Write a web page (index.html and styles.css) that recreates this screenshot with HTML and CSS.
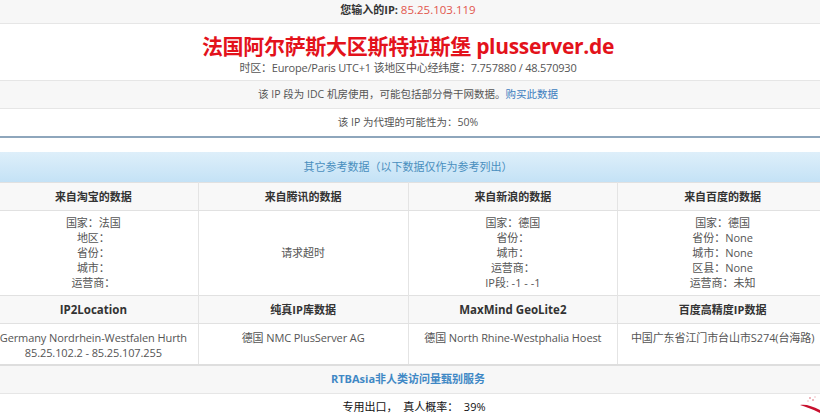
FILE: index.html
```html
<!DOCTYPE html>
<html lang="zh-CN">
<head>
<meta charset="utf-8">
<title>IP 查询</title>
<link rel="stylesheet" href="styles.css">
</head>
<body>
<div class="page">
  <div class="topbar"><b>您输入的IP:</b> <span class="ip">85.25.103.119</span></div>
  <div class="hero">
    <h1 class="title">法国阿尔萨斯大区斯特拉斯堡 plusserver.de</h1>
    <div class="sub">时区：Europe/Paris UTC+1 该地区中心经纬度：7.757880 / 48.570930</div>
  </div>
  <div class="row gray idc">该 IP 段为 IDC 机房使用，可能包括部分骨干网数据。<a class="link" href="#">购买此数据</a></div>
  <div class="row proxy">该 IP 为代理的可能性为：50%</div>
  <div class="band">其它参考数据（以下数据仅作为参考列出）</div>
  <table class="grid">
    <colgroup><col class="c"><col class="c"><col class="c"><col class="c"></colgroup>
    <tr class="th">
      <td>来自淘宝的数据</td><td>来自腾讯的数据</td><td>来自新浪的数据</td><td>来自百度的数据</td>
    </tr>
    <tr class="td1">
      <td>国家：法国<br>地区：<br>省份：<br>城市：<br>运营商：</td>
      <td>请求超时</td>
      <td>国家：德国<br>省份：<br>城市：<br>运营商：<br>IP段: -1 - -1</td>
      <td>国家：德国<br>省份：None<br>城市：None<br>区县：None<br>运营商：未知</td>
    </tr>
    <tr class="th">
      <td class="latin">IP2Location</td><td>纯真IP库数据</td><td class="latin">MaxMind GeoLite2</td><td>百度高精度IP数据</td>
    </tr>
    <tr class="td2">
      <td>Germany Nordrhein-Westfalen Hurth<br>85.25.102.2 - 85.25.107.255</td>
      <td>德国 NMC PlusServer AG</td>
      <td>德国 North Rhine-Westphalia Hoest</td>
      <td>中国广东省江门市台山市S274(台海路)</td>
    </tr>
  </table>
  <div class="row gray rtb">RTBAsia非人类访问量甄别服务</div>
  <div class="row real">专用出口，&nbsp;&nbsp;真人概率：&nbsp;&nbsp;39%</div>
</div>
<svg class="logo" width="24" height="24" viewBox="0 0 24 24">
  <circle cx="14" cy="3" r="1" fill="#e8a0a8"/>
  <circle cx="17" cy="5" r="1" fill="#e8a0a8"/>
  <circle cx="12" cy="6" r="0.8" fill="#f0b8c0"/>
  <circle cx="19" cy="2" r="0.8" fill="#f0b8c0"/>
  <path d="M4 10 C10 9 16 11 24 15 L24 18 C16 14 10 12 4 10 Z" fill="#c8102e"/>
</svg>
</body>
</html>
```
FILE: styles.css
```css
html, body {
  margin: 0;
  padding: 0;
  background: #fff;
  overflow: hidden;
}
body {
  font-family: "Open Sans", "Noto Sans CJK SC", sans-serif;
  font-size: 11px;
  color: #555;
}
.page {
  width: 840px;
  margin-left: -12px;
}
.topbar {
  height: 23px;
  line-height: 20px;
  text-align: center;
  background: #f7f7f7;
  border-bottom: 1px solid #e6e6e6;
  font-size: 11px;
  color: #333;
}
.topbar .ip {
  color: #e2564d;
  font-size: 11.5px;
}
.hero {
  height: 56px;
  text-align: center;
  background: #fff;
}
.title {
  margin: 0;
  padding-top: 9px;
  font-size: 21px;
  line-height: 27px;
  font-weight: bold;
  color: #e3121b;
  letter-spacing: -0.3px;
}
.sub {
  font-size: 11px;
  line-height: 16px;
  color: #555;
  letter-spacing: -0.2px;
}
.row {
  text-align: center;
  line-height: 26px;
  height: 27px;
}
.gray {
  background: #f7f7f7;
  border-top: 1px solid #e6e6e6;
  border-bottom: 1px solid #e6e6e6;
}
.idc {
  font-size: 10.5px;
}
.link {
  color: #3d7ebf;
  text-decoration: none;
}
.proxy {
  height: 27px;
  background: #fff;
  border-bottom: 2px solid #8ea6bc;
  font-size: 10.5px;
}
.band {
  margin-top: 14px;
  height: 30px;
  line-height: 29px;
  text-align: center;
  color: #4a8fbe;
  background: linear-gradient(#deeffa, #c4e2f6);
}
.grid {
  width: 840px;
  border-collapse: collapse;
  table-layout: fixed;
}
.grid .c {
  width: 25%;
}
.grid td {
  text-align: center;
  border-left: 1px solid #e4e4e4;
  border-right: 1px solid #e4e4e4;
  padding: 0;
  line-height: 15px;
}
.th td {
  height: 27px;
  background: #f8f8f8;
  color: #333;
  font-weight: bold;
  border-top: 1px solid #e1e1e1;
  border-bottom: 1px solid #e1e1e1;
}
.th .latin {
  font-size: 11.5px;
}
.td1 td {
  height: 75px;
  padding: 4px 0 5px;
  vertical-align: middle;
}
.td2 td {
  height: 30px;
  padding: 6px 0 4px;
  vertical-align: top;
  font-size: 11px;
  letter-spacing: -0.1px;
  border-bottom: 2px solid #dedede;
}
.rtb {
  border-top: 0;
  color: #3f88c5;
  font-weight: bold;
}
.real {
  color: #111;
  font-size: 11px;
  padding-left: 12px;
}
.logo {
  position: absolute;
  right: 0;
  bottom: 0;
}
```
